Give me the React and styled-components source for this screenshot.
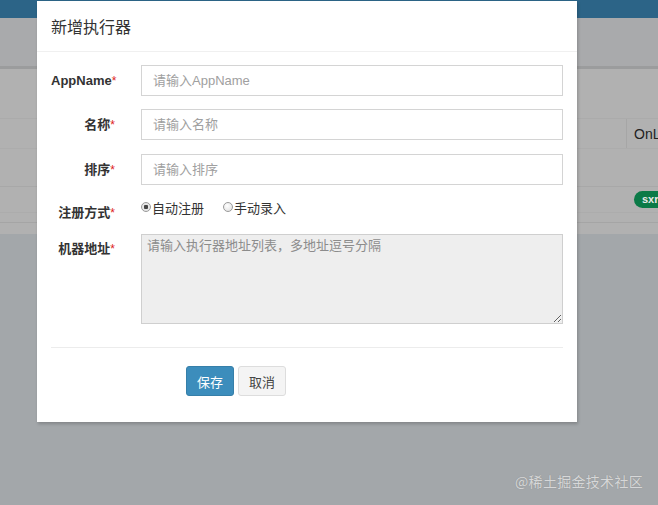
import React from "react";
import styled, { createGlobalStyle } from "styled-components";

const Global = createGlobalStyle`
  html, body { margin: 0; padding: 0; }
  body { font-family: "Liberation Sans", "Noto Sans CJK SC", sans-serif; }
  * { box-sizing: border-box; }
`;

const Page = styled.div`
  position: relative;
  width: 658px;
  height: 505px;
  overflow: hidden;
  background: #a3a7aa;
  display: flex;
  flex-direction: column;
`;

const TopBar = styled.div`
  height: 18px;
  background: #2c6487;
  flex: none;
`;

const Band = styled.div`
  height: 51px;
  background: #a9aaac;
  border-bottom: 3px solid #9b9c9d;
  flex: none;
`;

const Table = styled.div`
  height: 165px;
  background: #b1b1b1;
  display: flex;
  flex-direction: column;
  flex: none;
`;

const TRow = styled.div`
  height: ${(p) => p.$h}px;
  border-bottom: 1px solid ${(p) => p.$line || "#a9a9a9"};
  display: flex;
  align-items: ${(p) => p.$align || "center"};
  flex: none;
`;

const Spacer = styled.div`
  width: 626px;
  flex: none;
  align-self: stretch;
`;

const Cell = styled.div`
  align-self: stretch;
  border-left: ${(p) => (p.$border ? "1px solid #a6a6a6" : "none")};
  padding: ${(p) => p.$pad || "0 0 0 7px"};
  font-size: 14px;
  color: #222;
  display: flex;
  align-items: center;
  white-space: nowrap;
`;

const Badge = styled.span`
  display: inline-block;
  background: #0b7a47;
  color: #e8e8e8;
  font-weight: bold;
  font-size: 11px;
  height: 17px;
  line-height: 17px;
  padding: 0 8px;
  border-radius: 9px;
`;

const Watermark = styled.div`
  position: absolute;
  right: 15px;
  bottom: 14px;
  font-family: "Noto Sans CJK SC", sans-serif;
  font-size: 14px;
  color: #d6d7d8;
  text-shadow: 0 0 1px #888;
  letter-spacing: 0.3px;
`;

const Modal = styled.div`
  position: absolute;
  left: 37px;
  top: 1px;
  width: 540px;
  height: 421px;
  background: #fff;
  box-shadow: 1px 2px 3px rgba(0, 0, 0, 0.2);
  display: flex;
  flex-direction: column;
`;

const Header = styled.div`
  height: 51px;
  border-bottom: 1px solid #f0f0f0;
  padding: 0 14px;
  display: flex;
  align-items: center;
  font-family: "Noto Sans CJK SC", sans-serif;
  font-size: 16px;
  color: #333;
`;

const Body = styled.div`
  padding: 13px 14px 0;
  display: flex;
  flex-direction: column;
`;

const Row = styled.div`
  display: flex;
  align-items: flex-start;
  margin-bottom: ${(p) => p.$mb}px;
`;

const Label = styled.div`
  width: 64px;
  margin-right: 26px;
  text-align: right;
  font-weight: bold;
  font-size: 13px;
  color: #333;
  line-height: 17px;
  padding-top: ${(p) => p.$pt}px;
  font-family: "Liberation Sans", "Noto Sans CJK SC", sans-serif;
  white-space: nowrap;
  flex: none;
`;

const Req = styled.span`
  color: #dd2222;
  font-weight: normal;
  font-size: 12px;
`;

const Input = styled.input`
  width: 423px;
  height: 31px;
  border: 1px solid #d4d4d4;
  padding: 0 11px;
  font-size: 13px;
  font-family: "Liberation Sans", "Noto Sans CJK SC", sans-serif;
  color: #555;
  outline: none;
  &::placeholder { color: #a0a0a0; }
`;

const TextArea = styled.textarea`
  width: 423px;
  height: 90px;
  border: 1px solid #cfcfcf;
  background: #eeeeee;
  padding: 2px 5px;
  font-size: 13px;
  line-height: 17px;
  font-family: "Liberation Sans", "Noto Sans CJK SC", sans-serif;
  outline: none;
  resize: both;
  &::placeholder { color: #8c8c8c; }
`;

const RadioGroup = styled.div`
  display: flex;
  align-items: center;
  height: 20px;
  gap: 19px;
`;

const RadioLabel = styled.label`
  display: flex;
  align-items: center;
  font-size: 13px;
  color: #333;
  font-family: "Noto Sans CJK SC", sans-serif;
`;

const Radio = styled.input`
  appearance: none;
  width: 10px;
  height: 10px;
  margin: 0 1px 0 0;
  border-radius: 50%;
  border: 1px solid #9a9a9a;
  background: radial-gradient(circle at 40% 35%, #ffffff 0%, #dcdcdc 100%);
  &:checked {
    background: radial-gradient(circle, #444 0 2px, #e6e6e6 2.5px);
  }
`;

const Divider = styled.div`
  margin: 23px 14px 0;
  border-top: 1px solid #ececec;
`;

const Footer = styled.div`
  display: flex;
  gap: 4px;
  padding: 18px 0 0 149px;
`;

const Button = styled.button`
  height: 30px;
  padding: 0 10px;
  border-radius: 3px;
  font-size: 13px;
  font-family: "Noto Sans CJK SC", sans-serif;
  border: 1px solid ${(p) => (p.$primary ? "#367fa9" : "#dddddd")};
  background: ${(p) => (p.$primary ? "#3c8dbc" : "#f4f4f4")};
  color: ${(p) => (p.$primary ? "#fff" : "#444")};
`;

export default function App() {
  return (
    <>
      <Global />
      <Page>
        <TopBar />
        <Band />
        <Table>
          <TRow $h={50} $line="#ababab" />
          <TRow $h={30} $line="#acacac" $align="stretch">
            <Spacer />
            <Cell $border>OnL</Cell>
          </TRow>
          <TRow $h={38} $line="#a8a8a8" />
          <TRow $h={26} $line="#acacac">
            <Spacer />
            <Cell $pad="0 0 0 8px">
              <Badge>sxr</Badge>
            </Cell>
          </TRow>
          <TRow $h={10} $line="#a5a5a5" />
        </Table>
        <Watermark>@稀土掘金技术社区</Watermark>
        <Modal>
          <Header>新增执行器</Header>
          <Body>
            <Row $mb={13}>
              <Label $pt={7}>AppName<Req>*</Req></Label>
              <Input placeholder="请输入AppName" />
            </Row>
            <Row $mb={14}>
              <Label $pt={7}>名称<Req>*</Req></Label>
              <Input placeholder="请输入名称" />
            </Row>
            <Row $mb={12}>
              <Label $pt={7}>排序<Req>*</Req></Label>
              <Input placeholder="请输入排序" />
            </Row>
            <Row $mb={12}>
              <Label $pt={7}>注册方式<Req>*</Req></Label>
              <RadioGroup>
                <RadioLabel>
                  <Radio type="radio" name="reg" defaultChecked />
                  自动注册
                </RadioLabel>
                <RadioLabel>
                  <Radio type="radio" name="reg" />
                  手动录入
                </RadioLabel>
              </RadioGroup>
            </Row>
            <Row $mb={0}>
              <Label $pt={6}>机器地址<Req>*</Req></Label>
              <TextArea placeholder="请输入执行器地址列表，多地址逗号分隔" />
            </Row>
          </Body>
          <Divider />
          <Footer>
            <Button $primary>保存</Button>
            <Button>取消</Button>
          </Footer>
        </Modal>
      </Page>
    </>
  );
}
